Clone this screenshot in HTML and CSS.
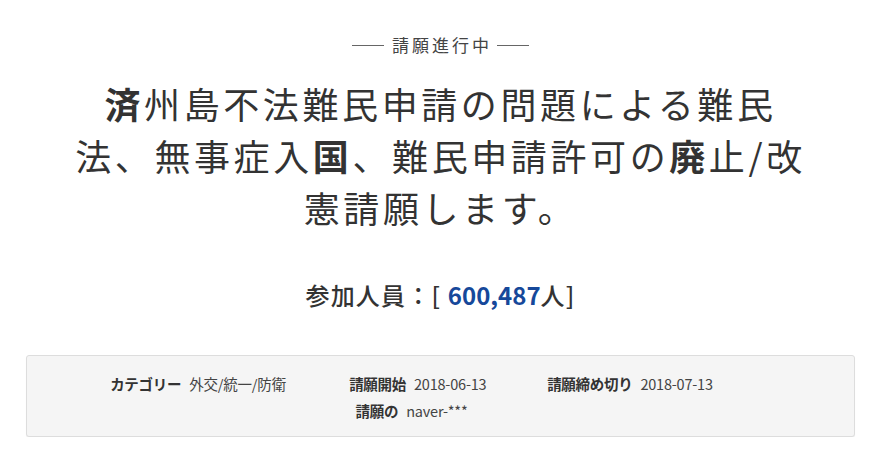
FILE: index.html
```html
<!DOCTYPE html>
<html lang="ja">
<head>
<meta charset="utf-8">
<title>請願進行中</title>
<link rel="stylesheet" href="styles.css">
</head>
<body>
<main class="page">
  <div class="status">
    <span class="status-line"></span>
    <span class="status-text">請願進行中</span>
    <span class="status-line"></span>
  </div>
  <h1 class="title"><span class="strong">済</span>州島不法難民申請の問題による難民<br>法、無事症入<span class="strong">国</span>、難民申請許可の<span class="strong">廃</span>止/改<br>憲請願します。</h1>
  <p class="count">参加人員：[ <span class="count-num">600,487</span>人]</p>
  <section class="info">
    <div class="info-row">
      <div class="info-item item-cat"><span class="label">カテゴリー</span><span class="value">外交/統一/防衛</span></div>
      <div class="info-item item-start"><span class="label">請願開始</span><span class="value">2018-06-13</span></div>
      <div class="info-item"><span class="label">請願締め切り</span><span class="value">2018-07-13</span></div>
    </div>
    <div class="info-row">
      <div class="info-item"><span class="label">請願の</span><span class="value">naver-***</span></div>
    </div>
  </section>
</main>
</body>
</html>
```
FILE: styles.css
```css
html, body {
  margin: 0;
  padding: 0;
  background: #ffffff;
}
body {
  font-family: "Noto Sans CJK JP", "Noto Sans", sans-serif;
  color: #333333;
}
.page {
  margin: 0 16px 0 26px;
  padding-top: 33px;
}
.status {
  display: flex;
  justify-content: center;
  align-items: center;
  gap: 8px;
  height: 24px;
}
.status-line {
  width: 32px;
  height: 1px;
  background: #666666;
}
.status-text {
  font-size: 17px;
  line-height: 24px;
  letter-spacing: 3px;
  color: #444444;
  margin-right: -3px;
}
.title {
  margin: 20px 0 0;
  font-size: 36px;
  line-height: 52px;
  font-weight: 400;
  letter-spacing: 3.6px;
  text-align: center;
  color: #333333;
}
.title .strong {
  font-weight: 700;
}
.count {
  margin: 45px 0 0;
  text-align: center;
  font-size: 24px;
  line-height: 34px;
  font-weight: 500;
  letter-spacing: 1.2px;
  color: #333333;
}
.count-num {
  color: #16489a;
  font-weight: 700;
  letter-spacing: 0;
}
.info {
  margin-top: 43px;
  background: #f5f5f5;
  border: 1px solid #dddddd;
  border-radius: 3px;
  box-shadow: 0 1px 1px rgba(0,0,0,0.06);
  padding: 14px 0 12px;
}
.info-row {
  display: flex;
  justify-content: center;
  padding-right: 58px;
  font-size: 14.5px;
  line-height: 27px;
}
.info-item {
  display: flex;
  gap: 8px;
  white-space: nowrap;
}
.item-cat {
  width: 239px;
}
.item-start {
  width: 198px;
}
.label {
  font-weight: 700;
  color: #333333;
  letter-spacing: -0.3px;
}
.value {
  color: #444444;
  letter-spacing: -0.2px;
}
```
